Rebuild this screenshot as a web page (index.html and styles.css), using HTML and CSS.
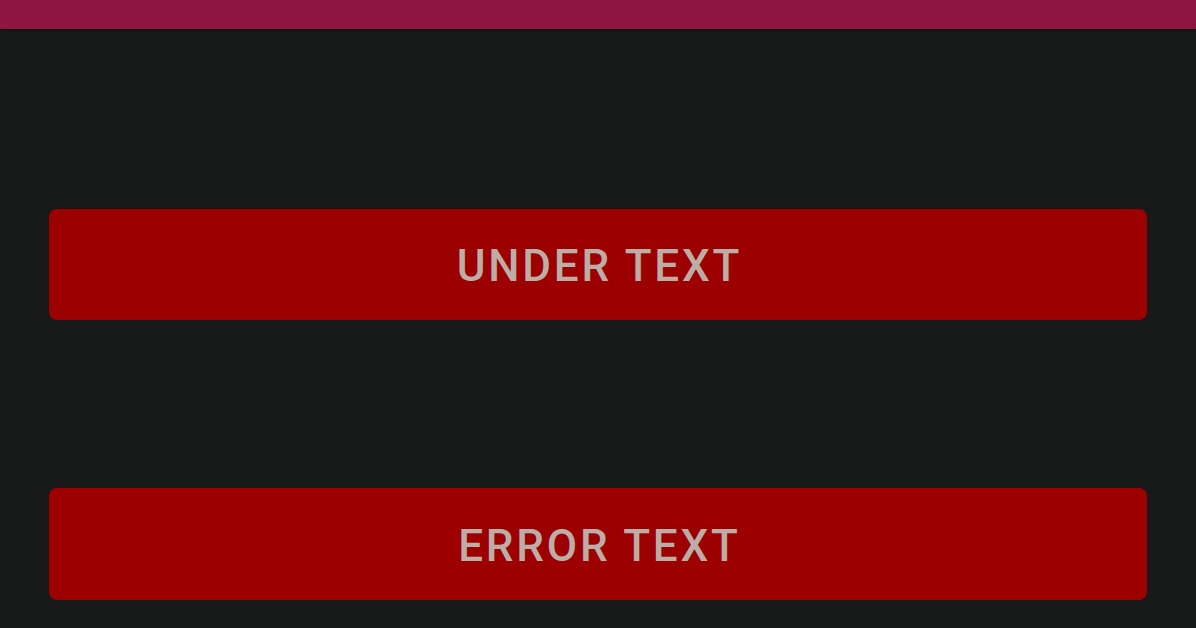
FILE: index.html
```html
<!DOCTYPE html>
<html>
<head>
<meta charset="utf-8">
<link rel="stylesheet" href="styles.css">
</head>
<body>
<div class="topbar"></div>
<main class="content">
  <button class="btn btn-first">UNDER TEXT</button>
  <button class="btn btn-second">ERROR TEXT</button>
</main>
</body>
</html>
```
FILE: styles.css
```css
html, body {
  margin: 0;
  padding: 0;
  height: 100%;
  background: #171818;
  overflow: hidden;
}
.topbar {
  height: 29px;
  background: #8e1540;
  box-shadow: 0 1px 2px rgba(0,0,0,0.5);
}
.content {
  display: flex;
  flex-direction: column;
  padding: 180px 49px 0 49px;
  gap: 168px;
}
.btn {
  height: 111px;
  border: none;
  border-radius: 8px;
  background: #9d0000;
  color: #bcaea6;
  font-family: Roboto, "Noto Sans", sans-serif;
  font-weight: 500;
  font-size: 44px;
  letter-spacing: 2.8px;
  text-indent: 2.8px;
  text-align: center;
  padding: 3px 0 0 0;
  width: 100%;
}
.btn-second {
  height: 112px;
}
```
